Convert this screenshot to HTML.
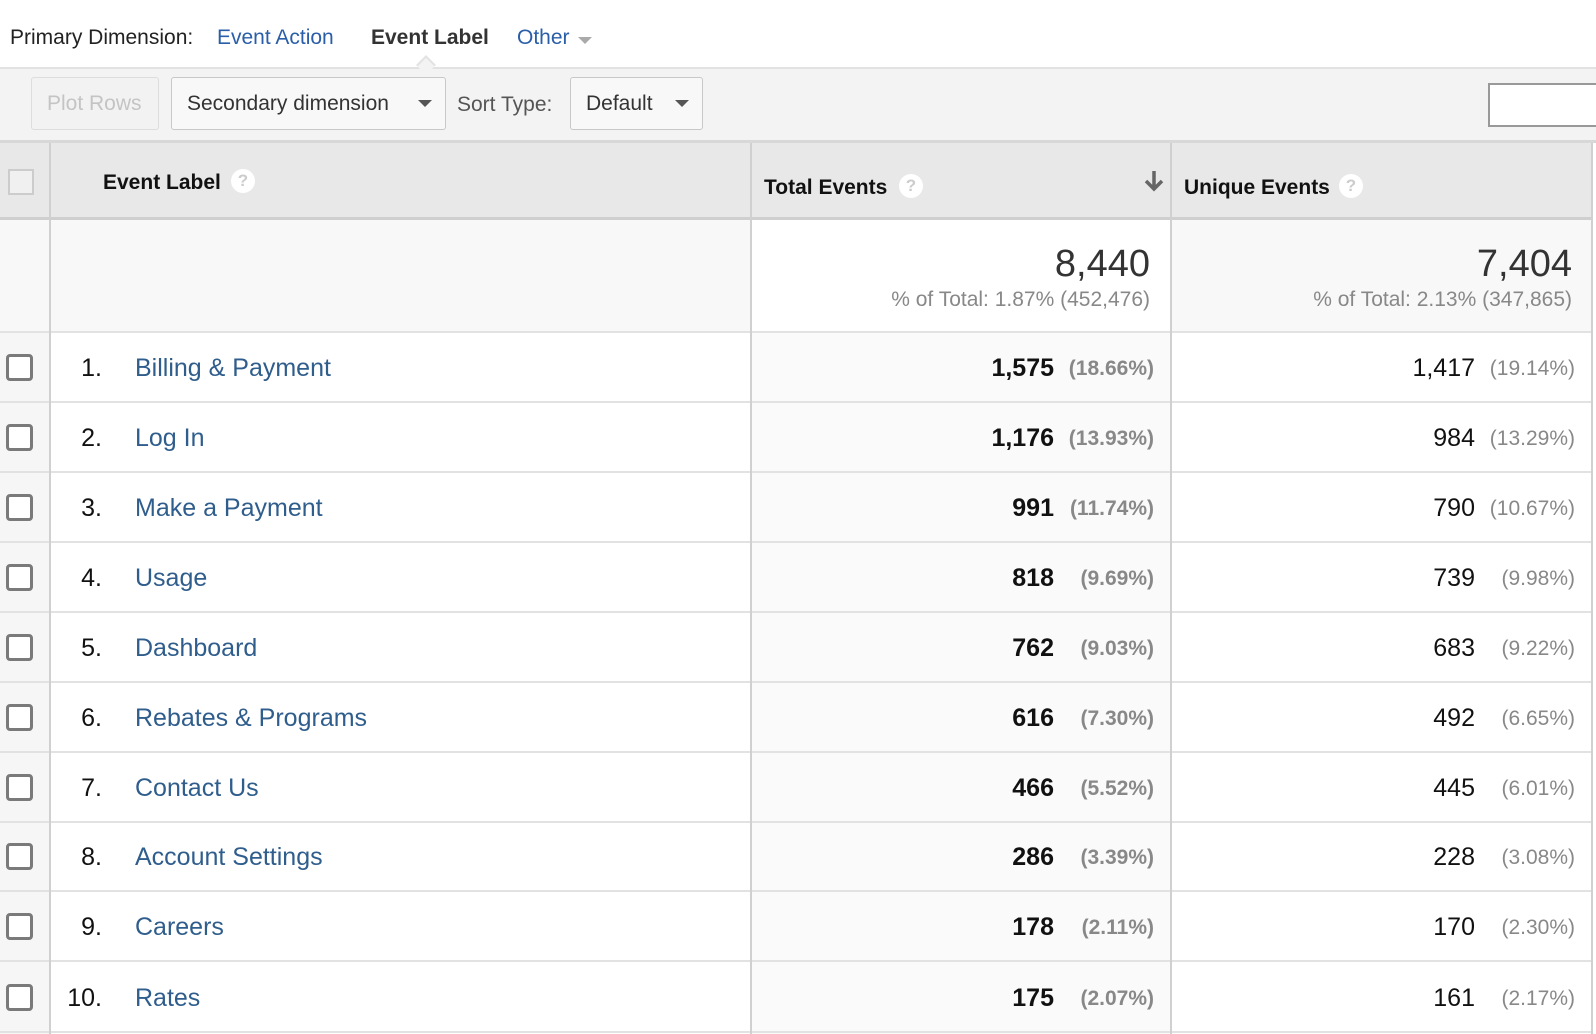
<!DOCTYPE html>
<html><head><meta charset="utf-8"><style>
*{margin:0;padding:0;box-sizing:border-box}
body{width:1596px;height:1034px;overflow:hidden;background:#fff;font-family:"Liberation Sans",Arial,sans-serif;position:relative;color:#222}
.a{position:absolute;white-space:nowrap}
.link{color:#2a5ea8}
.btn{position:absolute;border:1px solid #c8c8c8;border-radius:3px;background:#f8f8f8;font-size:21px;color:#333;display:flex;align-items:center}
.tri{width:0;height:0;border-left:7px solid transparent;border-right:7px solid transparent;border-top:7px solid #555;position:absolute}
.q{position:absolute;width:24px;height:24px;border-radius:50%;background:#fff;color:#ccc;font-size:17px;font-weight:bold;text-align:center;line-height:24px}
.row{position:absolute;left:0;width:1592px;height:70px;border-bottom:2px solid #e2e2e2}
.cb{position:absolute;left:6px;top:21px;width:27px;height:27px;border:3px solid #7a7a7a;border-radius:4px;background:#fff}
.num{position:absolute;right:1490px;top:21px;font-size:25px;color:#111}
.lab{position:absolute;left:135px;top:21px;font-size:25px;color:#2f5d8c}
.tv{position:absolute;right:538px;top:21px;font-size:25px;font-weight:bold;color:#111}
.tp{position:absolute;right:438px;top:24px;font-size:21px;font-weight:bold;color:#888}
.uv{position:absolute;right:117px;top:21px;font-size:25px;color:#111}
.up{position:absolute;right:17px;top:24px;font-size:21px;color:#888}
</style></head><body>
<div class="a" style="left:10px;top:26px;font-size:21px;color:#222">Primary Dimension:</div>
<div class="a link" style="left:217px;top:26px;font-size:21px">Event Action</div>
<div class="a" style="left:371px;top:26px;font-size:21px;font-weight:bold;color:#333">Event Label</div>
<div class="a link" style="left:517px;top:26px;font-size:21px">Other</div>
<div class="tri" style="left:578px;top:37px;border-top-color:#aaa"></div>

<div class="a" style="left:0;top:67px;width:1596px;height:76px;background:#f3f3f3;border-top:2px solid #e2e2e2;border-bottom:3px solid #d8d8d8"></div>
<div class="a" style="left:419px;top:58px;width:14px;height:14px;background:#f3f3f3;border-left:2px solid #e2e2e2;border-top:2px solid #e2e2e2;transform:rotate(45deg)"></div>
<div class="btn" style="left:31px;top:77px;width:128px;height:53px;color:#c4c4c4;padding-left:15px;background:#f2f2f2;border-color:#ddd">Plot Rows</div>
<div class="btn" style="left:171px;top:77px;width:275px;height:53px;padding-left:15px">Secondary dimension<div class="tri" style="left:246px;top:22px"></div></div>
<div class="a" style="left:457px;top:93px;font-size:21px;color:#555">Sort Type:</div>
<div class="btn" style="left:570px;top:77px;width:133px;height:53px;padding-left:15px">Default<div class="tri" style="left:104px;top:22px"></div></div>
<div class="a" style="left:1488px;top:83px;width:120px;height:44px;background:#fff;border:2px solid #999"></div>

<div class="a" style="left:0;top:143px;width:1592px;height:77px;background:#e8e8e8;border-bottom:3px solid #cfcfcf"></div>
<div class="a" style="left:8px;top:169px;width:26px;height:26px;border:2px solid #ccc;background:#f0f0f0"></div>
<div class="a" style="left:103px;top:171px;font-size:21px;font-weight:bold;color:#111">Event Label</div>
<div class="q" style="left:231px;top:169px">?</div>
<div class="a" style="left:764px;top:176px;font-size:21px;font-weight:bold;color:#111">Total Events</div>
<div class="q" style="left:899px;top:174px">?</div>
<svg class="a" style="left:1143px;top:169px" width="22" height="24" viewBox="0 0 22 24"><path d="M11 2v18M3 12l8 8 8-8" stroke="#666" stroke-width="3.5" fill="none"/></svg>
<div class="a" style="left:1184px;top:176px;font-size:21px;font-weight:bold;color:#111">Unique Events</div>
<div class="q" style="left:1339px;top:174px">?</div>

<div class="a" style="left:0;top:220px;width:1592px;height:113px;background:#f8f8f8;border-bottom:2px solid #e2e2e2"></div>
<div class="a" style="left:751px;top:220px;width:420px;height:111px;background:#fff"></div>
<div class="a" style="right:446px;top:243px;font-size:38px;color:#333">8,440</div>
<div class="a" style="right:446px;top:288px;font-size:21px;color:#888">% of Total: 1.87% (452,476)</div>
<div class="a" style="right:24px;top:243px;font-size:38px;color:#333">7,404</div>
<div class="a" style="right:24px;top:288px;font-size:21px;color:#888">% of Total: 2.13% (347,865)</div>

<div class="row" style="top:333px"><div class="cb"></div><div class="num">1.</div><div class="lab">Billing &amp; Payment</div><div class="tv">1,575</div><div class="tp">(18.66%)</div><div class="uv">1,417</div><div class="up">(19.14%)</div></div>
<div class="row" style="top:403px"><div class="cb"></div><div class="num">2.</div><div class="lab">Log In</div><div class="tv">1,176</div><div class="tp">(13.93%)</div><div class="uv">984</div><div class="up">(13.29%)</div></div>
<div class="row" style="top:473px"><div class="cb"></div><div class="num">3.</div><div class="lab">Make a Payment</div><div class="tv">991</div><div class="tp">(11.74%)</div><div class="uv">790</div><div class="up">(10.67%)</div></div>
<div class="row" style="top:543px"><div class="cb"></div><div class="num">4.</div><div class="lab">Usage</div><div class="tv">818</div><div class="tp">(9.69%)</div><div class="uv">739</div><div class="up">(9.98%)</div></div>
<div class="row" style="top:613px"><div class="cb"></div><div class="num">5.</div><div class="lab">Dashboard</div><div class="tv">762</div><div class="tp">(9.03%)</div><div class="uv">683</div><div class="up">(9.22%)</div></div>
<div class="row" style="top:683px"><div class="cb"></div><div class="num">6.</div><div class="lab">Rebates &amp; Programs</div><div class="tv">616</div><div class="tp">(7.30%)</div><div class="uv">492</div><div class="up">(6.65%)</div></div>
<div class="row" style="top:753px"><div class="cb"></div><div class="num">7.</div><div class="lab">Contact Us</div><div class="tv">466</div><div class="tp">(5.52%)</div><div class="uv">445</div><div class="up">(6.01%)</div></div>
<div class="row" style="top:822px"><div class="cb"></div><div class="num">8.</div><div class="lab">Account Settings</div><div class="tv">286</div><div class="tp">(3.39%)</div><div class="uv">228</div><div class="up">(3.08%)</div></div>
<div class="row" style="top:892px"><div class="cb"></div><div class="num">9.</div><div class="lab">Careers</div><div class="tv">178</div><div class="tp">(2.11%)</div><div class="uv">170</div><div class="up">(2.30%)</div></div>
<div class="row" style="top:963px"><div class="cb"></div><div class="num">10.</div><div class="lab">Rates</div><div class="tv">175</div><div class="tp">(2.07%)</div><div class="uv">161</div><div class="up">(2.17%)</div></div>

<div class="a" style="left:0;top:333px;width:49px;height:701px;background:#f6f6f6;z-index:-1"></div>
<div class="a" style="left:751px;top:333px;width:420px;height:701px;background:#fafafa;z-index:-1"></div>
<div class="a" style="left:49px;top:143px;width:2px;height:891px;background:#d0d0d0"></div>
<div class="a" style="left:750px;top:143px;width:2px;height:891px;background:#d0d0d0"></div>
<div class="a" style="left:1170px;top:143px;width:2px;height:891px;background:#d0d0d0"></div>
<div class="a" style="left:1591px;top:143px;width:2px;height:891px;background:#d0d0d0"></div>
</body></html>
